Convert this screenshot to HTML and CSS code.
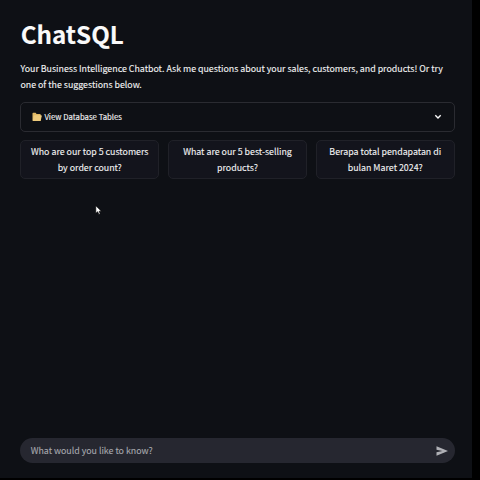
FILE: index.html
```html
<!DOCTYPE html>
<html lang="en">
<head>
<meta charset="utf-8">
<title>ChatSQL</title>
<link rel="stylesheet" href="styles.css">
</head>
<body>
<main class="app">
  <h1 class="title">ChatSQL</h1>
  <p class="intro">Your Business Intelligence Chatbot. Ask me questions about your sales, customers, and products! Or try<br>one of the suggestions below.</p>
  <div class="expander">
    <svg class="folder" viewBox="0 0 10 10"><path d="M.5 1.5Q.5.8 1.2.8H3.6L4.6 2H8Q8.7 2 8.7 2.8V8.9H1.2Q.5 8.9.5 8.2Z" fill="#e0b864"/><path d="M.8 8.6 1.6 4.2Q1.8 3.3 2.6 3.3H9.2Q9.9 3.3 9.7 4.2L8.8 8.2Q8.6 8.9 7.9 8.9H1.2Z" fill="#edca7c"/></svg>
    <span class="label">View Database Tables</span>
    <svg class="chevron" viewBox="0 0 8 6"><path d="M1.3 1.3 4 4 6.7 1.3" fill="none" stroke="#fafafa" stroke-width="1.4"/></svg>
  </div>
  <div class="suggestions">
    <button class="suggestion">Who are our top 5 customers<br>by order count?</button>
    <button class="suggestion">What are our 5 best-selling<br>products?</button>
    <button class="suggestion">Berapa total pendapatan di<br>bulan Maret 2024?</button>
  </div>
  <div class="chat-input">
    <span class="placeholder">What would you like to know?</span>
    <svg class="send" viewBox="0 0 12 10"><path d="M.5.2 12 5 .5 9.8V6.2L6.4 5 .5 3.8Z" fill="#b0b1b6"/></svg>
  </div>
</main>
<svg class="cursor" viewBox="0 0 8 11"><path d="M.8.7V8.3L2.7 6.7 3.9 9.4 5.2 8.8 4.1 6.2H6.4Z" fill="#fff" stroke="#000" stroke-width=".6"/></svg>
</body>
</html>
```
FILE: styles.css
```css
* { box-sizing: border-box; }
body {
  margin: 0;
  background: #000;
  color: #f0f0f1;
  font-family: "Noto Sans CJK SC", "Noto Sans", sans-serif;
  font-size: 8.83px;
  line-height: 15.8px;
  -webkit-text-stroke: .12px currentColor;
}
.app {
  display: flex;
  flex-direction: column;
  width: 472px;
  height: 478px;
  padding: 18px 17.4px 15px 20.4px;
  background: #0e1015;
}
.title {
  margin: 0;
  padding-left: .3px;
  color: #fafafa;
  font-size: 24.2px;
  line-height: 32px;
  font-weight: 700;
}
.intro { margin: 11px 0 0; height: 32px; white-space: nowrap; }
.expander {
  display: flex;
  align-items: center;
  height: 30px;
  margin-top: 9px;
  padding: 0 12px 0 10.5px;
  border: 1px solid #2a2b31;
  border-radius: 5px;
}
.folder { width: 10px; height: 10px; margin-right: 2.5px; }
.label { font-size: 7.75px; }
.chevron { width: 8px; height: 6px; margin-left: auto; }
.suggestions {
  display: grid;
  grid-template-columns: repeat(3, 1fr);
  gap: 9px;
  margin-top: 8px;
}
.suggestion {
  height: 39px;
  padding: 0;
  border: 1px solid #202128;
  border-radius: 5px;
  background: #13141c;
  color: inherit;
  font: inherit;
  white-space: nowrap;
}
.chat-input {
  display: flex;
  align-items: center;
  height: 25px;
  margin-top: auto;
  padding: 0 7px 0 10.3px;
  border-radius: 13px;
  background: #262730;
}
.placeholder { color: #a5a6ac; }
.send { width: 12px; height: 10px; margin-left: auto; }
.cursor { position: absolute; left: 95px; top: 204.5px; width: 8px; height: 11px; }
```
